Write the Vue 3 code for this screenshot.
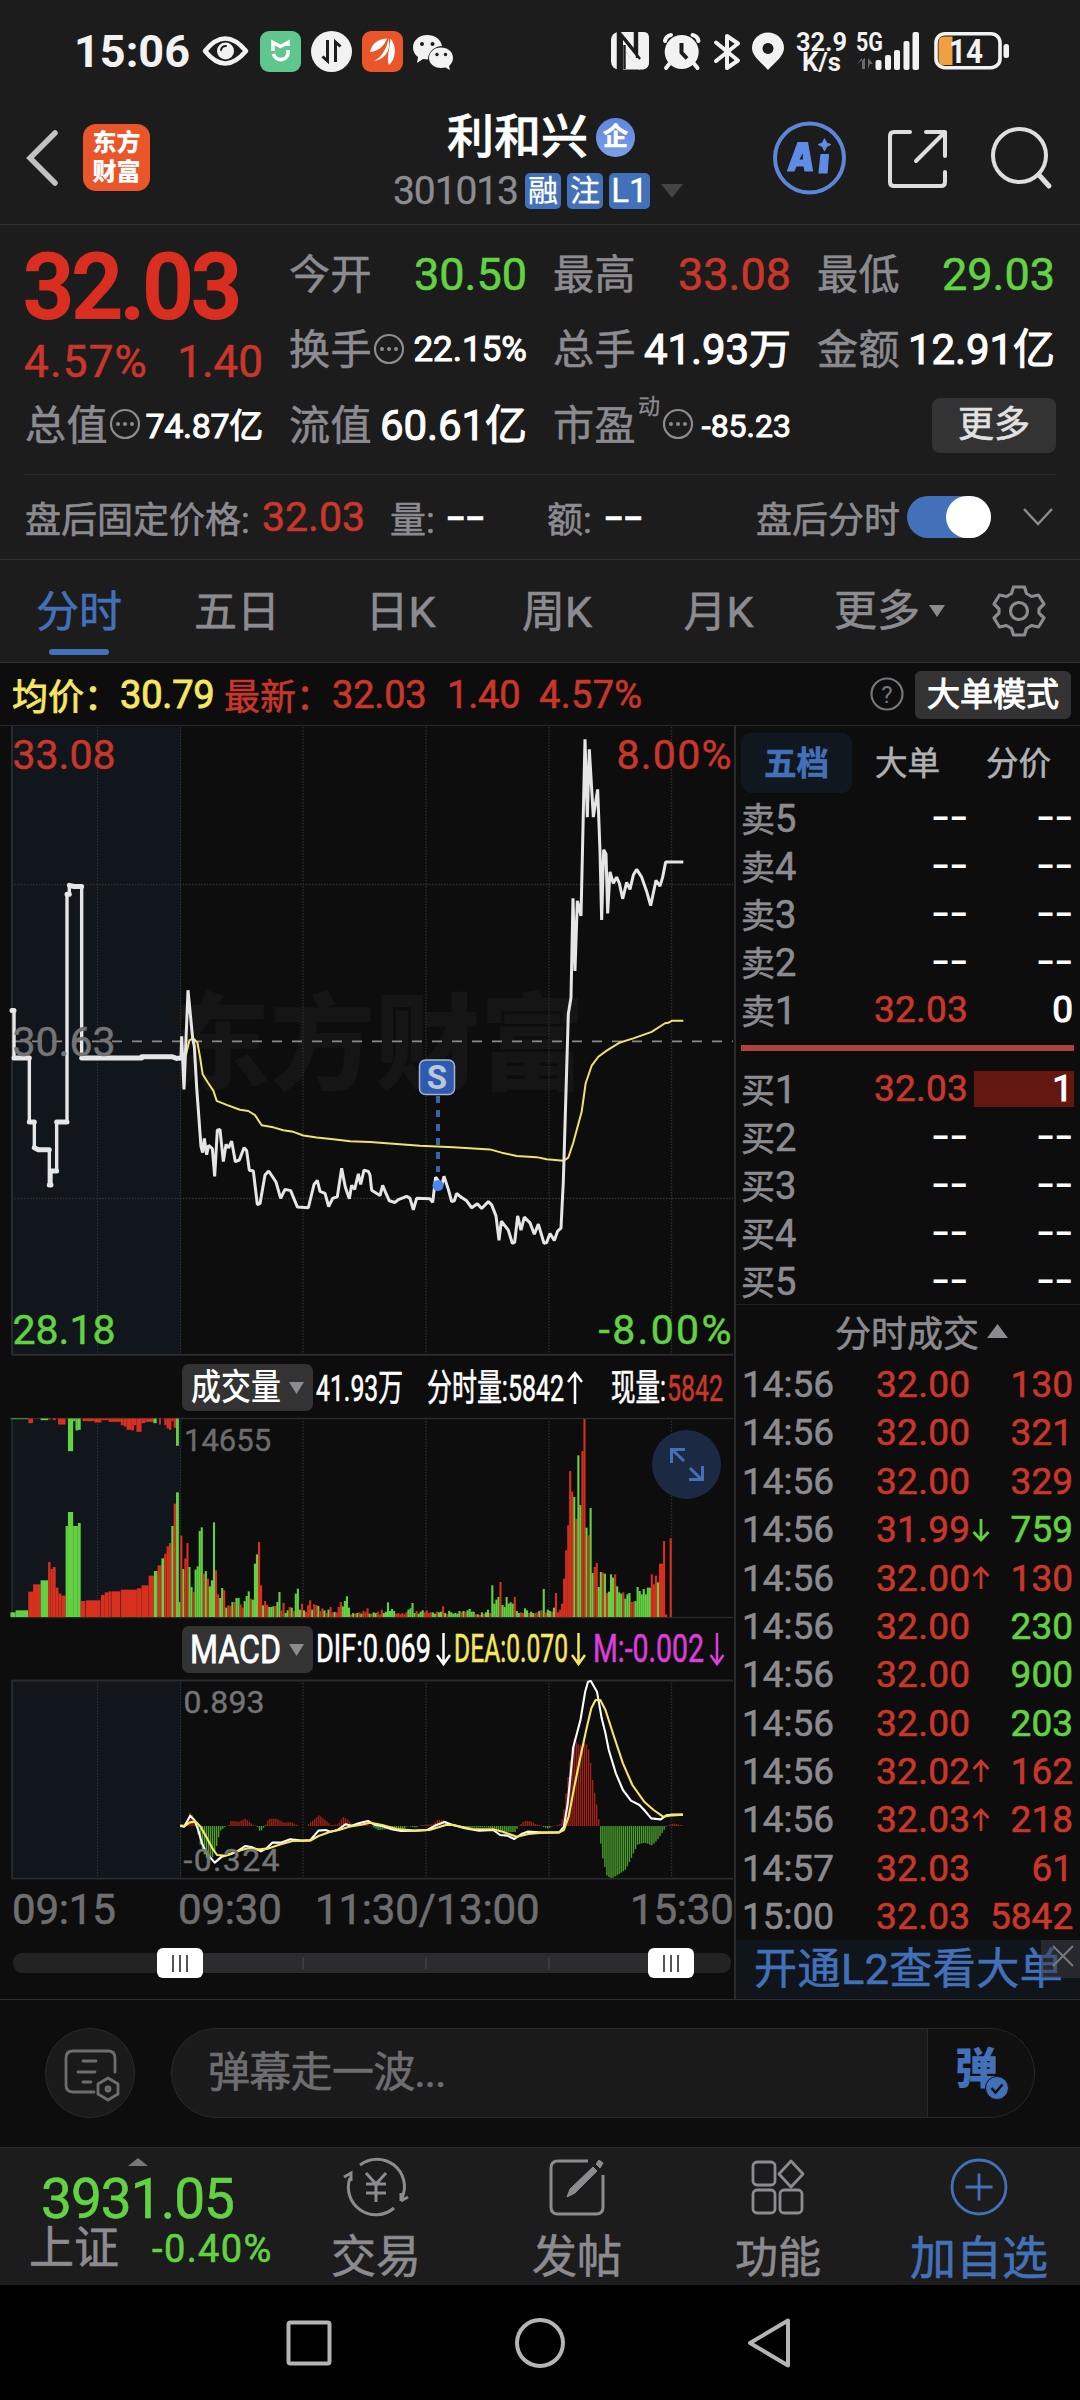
<script setup>
const GREY = '#8b8b90'

const quotes = [
  { k: '今开', v: '30.50', c: 'green big' },
  { k: '最高', v: '33.08', c: 'red big' },
  { k: '最低', v: '29.03', c: 'green big' },
  { k: '换手', v: '22.15%', c: 'small', info: true },
  { k: '总手', v: '41.93万', c: '' },
  { k: '金额', v: '12.91亿', c: '' },
]

const tabs = ['五日', '日K', '周K', '月K']
const asks = [5, 4, 3, 2, 1].map((n) => ({ k: '卖', n, p: n === 1 ? '32.03' : '--', q: n === 1 ? '0' : '--' }))
const bids = [1, 2, 3, 4, 5].map((n) => ({ k: '买', n, p: n === 1 ? '32.03' : '--', q: n === 1 ? '1' : '--' }))

const trades = [
  ['14:56', '32.00', '', '130', 'red'],
  ['14:56', '32.00', '', '321', 'red'],
  ['14:56', '32.00', '', '329', 'red'],
  ['14:56', '31.99', 'down', '759', 'green'],
  ['14:56', '32.00', 'up', '130', 'red'],
  ['14:56', '32.00', '', '230', 'green'],
  ['14:56', '32.00', '', '900', 'green'],
  ['14:56', '32.00', '', '203', 'green'],
  ['14:56', '32.02', 'up', '162', 'red'],
  ['14:56', '32.03', 'up', '218', 'red'],
  ['14:57', '32.03', '', '61', 'red'],
  ['15:00', '32.03', '', '5842', 'red'],
]

const gridX = [97.5, 180.5, 303, 426, 549, 671.5]

// Intraday curves, in thirds of a pixel across and 1/2.45 px down.
const preLine = '36,712 42,712 42,828 88,828 88,985 103,985 103,1048 115,1053 148,1053 148,1139 153,1139 153,1105 170,1105 170,985 201,985 201,427 208,427 208,405 222,408 245,408 245,828 425,828 425,825 515,825 530,829 543,828'
const preFlat = preLine
  .split(' ')
  .map((p) => p.split(',').map(Number))
  .flatMap((p, i, all) => (i && Math.abs(p[1] - all[i - 1][1]) <= 5 ? [`M${all[i - 1]}L${p}`] : []))
  .join('')
const priceLine = '543,828 545,775 552,905 564,662 578,780 583,800 590,900 603,1045 608,1060 613,1025 620,1065 626,1042 637,1050 644,1118 652,1005 660,1003 670,1082 678,1040 686,1048 695,1032 706,1082 718,1078 732,1048 740,1055 748,1103 760,1105 772,1187 780,1185 795,1115 806,1105 828,1132 842,1172 855,1150 872,1153 892,1193 925,1195 942,1138 952,1128 960,1155 975,1160 986,1192 998,1172 1012,1168 1025,1098 1036,1145 1048,1173 1055,1140 1064,1150 1075,1112 1082,1138 1092,1103 1105,1106 1110,1115 1115,1152 1140,1165 1148,1140 1158,1160 1168,1178 1185,1182 1195,1175 1220,1167 1230,1172 1240,1200 1250,1172 1290,1173 1298,1182 1307,1120 1325,1140 1332,1118 1345,1150 1355,1180 1363,1178 1370,1160 1385,1170 1400,1178 1415,1195 1432,1185 1445,1197 1465,1180 1475,1188 1488,1215 1497,1275 1504,1228 1525,1250 1537,1282 1544,1280 1553,1215 1563,1250 1573,1218 1590,1232 1603,1260 1615,1235 1632,1282 1640,1280 1650,1258 1663,1275 1673,1252 1683,1245 1690,1130 1705,720 1713,680 1719,437 1725,615 1732,443 1743,480 1755,47 1762,238 1768,72 1780,238 1793,170 1800,320 1805,490 1811,318 1818,328 1823,474 1830,372 1840,400 1850,385 1858,400 1868,438 1880,398 1890,415 1900,380 1910,366 1925,385 1940,420 1952,455 1968,393 1980,407 1988,385 1997,348 2050,348'
const avgLine = '545,828 558,820 568,785 580,780 592,790 600,825 608,868 625,890 640,908 650,933 680,943 720,955 745,958 765,968 785,993 820,998 850,1005 880,1009 910,1018 950,1023 1000,1027 1050,1032 1110,1034 1180,1038 1260,1043 1360,1047 1470,1052 1505,1060 1550,1068 1610,1071 1640,1076 1690,1080 1705,1072 1720,1035 1745,960 1757,890 1775,847 1795,825 1820,810 1860,790 1900,780 1955,764 1995,743 2005,742 2015,737 2050,737'

// Sub-chart data: 2.119 units per px across, 3 units per px down.
const SX = 1 / 2.119
const SY = 1 / 3
const segments = [
  [382, 'r244 g144 r176 r222 g150 g90 r75 g142 g152 g258 g269 r130 g138 r115 g92 g110 g284 r140 r68 g57 g87 r80 g28 r35 r33 g45 r45 g57 g57 r38 r28 g48 g63 g77 r55 g52'],
  [538, 'g160 g188 r225 r95 g35 r48 r36 g30 g30 g32 r33 g45 g75 r20 r42 g12 g20 r30 g28 r18 g70 g85 g22 r40'],
  [642, 'g20 r15 r35 r50 g22 r38 r36 g33 r18 r26 g20 r12 g22 r30 r14 g15 r14 r30 r45 g32 g48 g62 g28'],
  [742, 'r8 g12 r10 g12 r14 g10 r18 r14 r26 g10 r10 g14 g12 r16 r8 r22 g12 g16 g44 g18 g24 g18 r10 r12 r8 r12 r8 r14 g22 g26 g42 g12 r18 g10 g16 g20 r14'],
  [902, 'r20 r12 r14 g14 g10 r16 g14 g16 r32 g12 r8 g18 g14 g10 g12 g10 g18 r14 g18 r16 g20 g24 g16 g16 r8 g8 r6 g14 r10 g14 g22 r12'],
  [1041, 'g95 g40 g52 g60 r105 g36 g30 g60 g40 g44 g40 r60 g18 g12 r14 r12 g26 g20 r12 g16 g12 r12 r14 g18 r20'],
  [1150, 'g84 r14 g22 g18 r16 g28 r72 r14 r22 r40 r115 r200 r275'],
  [1206, 'r438 r376 g360 r295 g485 g336 r498 r594 g268 r245 g327 g132 r150 r162 g90 g135 r133 g130 r72 g76 g128 g118 r128 g92 g74 g70 r74 g55 g68 g72 r45 r46 g48 g90 g78 g68 g84 g68 g88 g88'],
  [1379, 'r128 r98 r124 g104 r160 r160 r228 r8'],
  [1419, 'r236'],
]
const RED = '#d7301f'
const GREEN = '#62d243'
const volume = segments.flatMap(([x0, s]) =>
  s.split(' ').map((t, i) => {
    const h = +t.slice(1) * SY
    return { x: (x0 + i * 4.33) * SX, y: 1617 - h, w: 2.1, h, c: t[0] === 'r' ? RED : GREEN }
  }),
)
const span = (str, hang) =>
  str.split(' ').map((t) => {
    const [a, b, h] = t.slice(1).split(',').map(Number)
    return { x: a * SX, w: (b - a) * SX, h: h * SY, y: hang ? 1418.5 : 1617 - h * SY, c: t[0] === 'r' ? RED : GREEN }
  })
const auction = [
  ...span('g22,33,14 g33,60,20 r60,70,76 r70,86,98 g86,102,110 r102,107,165 r107,112,144 r112,118,150 r118,124,88 r124,130,70 r130,139,64 g139,144,273 g144,155,315 g155,165,273 g165,171,282 r171,181,48 r182,213,50 r214,222,66 r222,230,74 r230,235,77 r236,255,77 r256,290,82 r290,300,86 r300,315,95 r315,326,124 g326,334,138 r334,342,155 g342,348,176 r348,353,190 r353,358,212 r358,363,222 g363,368,273 r368,373,340 g373,379,374 g379,383,45', false),
  ...span('g22,60,2 r60,70,14 g86,102,5 r102,107,3 r112,118,5 r123,139,18 g144,155,98 g155,160,8 g160,165,36 g165,171,34 r175,200,8 r200,215,12 r215,230,5 r230,256,10 r256,262,20 r262,268,24 r268,278,34 r278,284,36 r284,289,20 r289,300,40 r300,308,14 r308,325,10 g325,332,14 r337,341,18 r348,353,20 r353,358,30 r358,363,34 r363,368,8 r368,373,28 g373,379,82', true),
]

const envelope = [
  [382, 5], [395, 3], [402, 45], [410, 20], [415, 0], [425, -70], [437, -98], [447, -100], [456, -70], [465, -15], [478, 0], [484, 3], [488, 15], [505, 13], [518, 22], [535, 4], [543, 0], [550, -18], [560, 0], [568, 22], [585, 22], [600, 10], [615, 12], [628, 3], [634, 0], [648, 0], [660, 15], [675, 33], [690, 15], [700, 3], [715, 5], [725, 27], [735, 20], [745, 5], [775, 5], [785, 0], [800, -12], [830, -8], [855, -8], [862, 0], [880, -5], [890, 3], [915, 5], [925, 18], [938, 18], [950, 8], [955, 0], [980, -6], [1030, -4], [1050, -10], [1070, -18], [1092, -18], [1096, 0], [1100, 3], [1110, 15], [1122, 15], [1135, 5], [1145, 2], [1150, -3], [1160, -8], [1170, 0], [1185, 5], [1192, 30], [1200, 120], [1207, 200], [1214, 264], [1227, 240], [1240, 250], [1247, 225], [1255, 130], [1265, 48], [1269, 0], [1273, -80], [1285, -150], [1295, -157], [1310, -145], [1325, -130], [1340, -85], [1350, -55], [1365, -50], [1380, -58], [1390, -45], [1400, -25], [1410, -2], [1415, 2], [1425, 8], [1448, 1],
]
const macd = []
for (let x = 384, k = 0; x < 1448; x += 4.33) {
  while (envelope[k + 1][0] < x) k++
  const [x0, y0] = envelope[k]
  const [x1, y1] = envelope[k + 1]
  const v = (y0 + ((y1 - y0) * (x - x0)) / (x1 - x0)) * SY
  macd.push({ x: x * SX, y: v > 0 ? 1826 - v : 1826, h: Math.abs(v), c: v > 0 ? '#a32318' : '#4ba32e' })
}
const dif = '382,587 390,590 396,575 403,557 412,570 420,600 428,640 438,670 455,698 470,680 490,672 505,662 520,648 535,652 553,664 565,655 577,638 595,638 615,628 640,632 658,630 675,602 690,600 700,605 715,600 732,583 745,587 760,580 780,573 795,585 810,588 830,598 850,603 880,602 905,600 925,585 942,576 955,583 985,595 1015,602 1045,600 1060,615 1075,617 1090,627 1105,612 1118,605 1150,608 1185,607 1195,590 1203,520 1215,350 1230,270 1240,185 1246,155 1252,153 1265,185 1275,265 1283,310 1290,360 1305,430 1320,480 1337,512 1355,525 1365,540 1380,565 1400,568 1412,556 1425,554 1447,554'
const dea = '382,587 392,588 402,577 415,575 425,590 437,620 450,655 460,675 475,677 500,665 525,655 550,658 570,655 590,645 620,633 658,632 675,618 700,605 718,600 740,590 765,584 785,578 810,585 840,597 880,602 910,600 945,585 960,585 1000,597 1045,598 1065,605 1095,620 1120,612 1150,608 1185,607 1195,600 1205,560 1217,470 1230,380 1243,295 1253,235 1262,210 1272,210 1283,240 1300,315 1320,400 1340,465 1365,515 1385,540 1405,560 1425,556 1447,554'
</script>

<template>
  <div class="screen">
    <header class="status">
      <span class="clock">15:06</span>
      <svg class="st-left" width="256" height="46" viewBox="200 28 256 46">
        <path d="M205 51Q225 26 246 51Q225 76 205 51Z" fill="none" stroke="#f2f2f2" stroke-width="4.5" stroke-linejoin="round" />
        <circle cx="225.500" cy="51" r="8.500" fill="#f2f2f2" />
        <path d="M221 50a5 5 0 0 1 5-4" fill="none" stroke="#1c1c1c" stroke-width="2" stroke-linecap="round" />
        <rect x="260" y="31" width="41" height="41" rx="9" fill="#5fc78d" />
        <path d="M273 51V42.500l7.500 4 7.500-4V46M273.500 54a7.500 7.500 0 0 0 14.500 0V50" fill="none" stroke="#fff" stroke-width="3.600" />
        <circle cx="331.500" cy="51.500" r="20.500" fill="#f2f2f2" />
        <path d="M327.500 40V61l-5-4.500M335.500 62V42l5 4.500" fill="none" stroke="#1c1c1c" stroke-width="3" />
        <rect x="362" y="31" width="41" height="41" rx="9" fill="#ea5529" />
        <path d="M370 52C372 44 377 39 387 38.500C384 46 379 51 370 52ZM374 61C382 57 387 48 388.500 38.500C391 48 387 59 374 61ZM389 65C386 59 390 48 390.500 38.500C397 46 396 59 389 65Z" fill="#fff" />
        <path d="M427 35c-8 0-14 5.500-14 12.500 0 4 2 7.500 5 9.500l-1 6 6-4 5 .5c0-8 7-13.500 14-13.500-1-6.500-7-11-15-11Z" fill="#f2f2f2" />
        <path d="M441 47.500c7 0 12 4.500 12 10.500 0 3-1.500 6-4 8l1 4-4.500-2.500-4.500.5c-7 0-12-4.500-12-10s5-10.500 12-10.500Z" fill="#f2f2f2" />
        <g fill="#1c1c1c"><circle cx="422" cy="44" r="2" /><circle cx="432.500" cy="44" r="2" /><circle cx="437" cy="54.500" r="1.700" /><circle cx="445.500" cy="54.500" r="1.700" /></g>
      </svg>
      <svg class="st-right" width="404" height="46" viewBox="608 28 404 46">
        <rect x="611" y="32" width="38" height="37.500" rx="8" fill="#f2f2f2" />
        <path d="M621 71V39L638 60V31" fill="none" stroke="#1c1c1c" stroke-width="8.500" />
        <path d="M615 69.500h8V40L636 56V32h8q5 0 5 6V62q0 7-6 7.500h-4L626 52V69.500Z" fill="#f2f2f2" />
        <path d="M624.500 69V45M637 58V32M624 38L640 59" fill="none" stroke="#1c1c1c" stroke-width="2.400" />
        <g fill="none" stroke="#f2f2f2" stroke-width="4" stroke-linecap="round">
          <path d="M665 41q1-5 6-6M698.500 41q-1-5-6-6M670 63l-4 5M693.500 63l4 5" />
        </g>
        <circle cx="681.700" cy="52" r="17" fill="#f2f2f2" />
        <path d="M681.500 43V52.500l5.500 6" fill="none" stroke="#1c1c1c" stroke-width="4" />
        <path d="M716 42.500L738 60.500 727 68V36l11 7.500L716 61" fill="none" stroke="#f2f2f2" stroke-width="4" stroke-linejoin="round" stroke-linecap="round" />
        <path d="M768 70C760 61 752 56 752 48a16 15.500 0 0 1 32 0c0 8-8 13-16 22ZM768 43a5.500 5.500 0 1 0 .01 0Z" fill="#f2f2f2" fill-rule="evenodd" />
        <g fill="#f2f2f2" font-weight="700">
          <text x="796" y="50.500" font-size="26" textLength="51" lengthAdjust="spacingAndGlyphs">32.9</text>
          <text x="802" y="70.500" font-size="25" textLength="39" lengthAdjust="spacingAndGlyphs">K/s</text>
          <text x="856" y="51" font-size="25" textLength="27" lengthAdjust="spacingAndGlyphs">5G</text>
          <rect x="875.500" y="60" width="6" height="10" rx="2" /><rect x="885" y="55" width="6" height="15" rx="2" /><rect x="894" y="50" width="6" height="20" rx="2" /><rect x="903.500" y="41" width="6" height="29" rx="2" /><rect x="912.500" y="32" width="6.500" height="38" rx="2" />
        </g>
        <path d="M857 64l5-6v11h3V58M868 69V58l5 6h-3" fill="#6a6a6a" />
        <rect x="936" y="33.700" width="64" height="34" rx="9" fill="none" stroke="#f2f2f2" stroke-width="3.600" />
        <path d="M944 36.500h8.500v28.500h-8.500q-5.500 0-5.500-6v-16.500q0-6 5.500-6Z" fill="#f0a040" />
        <rect x="1003.500" y="44" width="5.500" height="14" rx="2.500" fill="#f2f2f2" />
        <text x="949" y="62.500" font-size="34" font-weight="700" fill="#f2f2f2" textLength="34" lengthAdjust="spacingAndGlyphs">14</text>
      </svg>
    </header>

    <div class="head">
      <svg class="back" width="34" height="58" viewBox="0 0 34 58"><path d="M29 4L4 29l25 25" fill="none" stroke="#c2c2c2" stroke-width="5.500" stroke-linecap="round" /></svg>
      <div class="logo"><span>东方</span><span>财富</span></div>
      <div class="name">
        <div class="title">利和兴<i>企</i></div>
        <div class="code"><span>301013</span><b>融</b><b>注</b><b class="l1">L1</b>
          <svg width="22" height="14" viewBox="0 0 22 14"><path d="M0 0h22L11 14Z" fill="#444446" /></svg></div>
      </div>
      <svg class="head-icons" width="290" height="80" viewBox="768 117 290 80" fill="none" stroke="#dedede" stroke-width="4" stroke-linecap="round" stroke-linejoin="round">
        <circle cx="808.500" cy="157" r="34.500" stroke="#5d86d8" />
        <path d="M786.500 170L797 141.500h9.500L811.500 170h-7.500l-1-5h-8l-2 5ZM797.500 159h5v-9ZM820 153.500h7.500l-1.500 18.500h-8ZM823.500 138l2 4 4 1.500-4 2-2 4-2-4-4-2 4-1.500Z" fill="#5f8ce6" stroke="#5f8ce6" stroke-width="1.200" fill-rule="evenodd" />
        <path d="M909 131H893q-4 0-4 4V181q0 4 4 4H940q4 0 4-4V171M925 131H944V155M944 131L915 160" />
        <circle cx="1018.500" cy="154.500" r="26.500" /><path d="M1038 174l10 11" stroke-width="5" />
      </svg>
    </div>

    <section class="quote">
      <div class="last"><div class="price">32.03</div><div class="chg"><span>4.57%</span><span>1.40</span></div></div>
      <div v-for="q in quotes" :key="q.k" class="cell">
        <span class="k">{{ q.k }}<svg v-if="q.info" class="info" width="32" height="32" viewBox="0 0 32 32"><circle cx="16" cy="16" r="14" fill="none" :stroke="GREY" stroke-width="2.200" /><g :fill="GREY"><circle cx="9" cy="16" r="2" /><circle cx="16" cy="16" r="2" /><circle cx="23" cy="16" r="2" /></g></svg></span>
        <span class="v" :class="q.c">{{ q.v }}</span>
      </div>
      <div class="cell"><span class="k">总值<svg class="info" width="32" height="32" viewBox="0 0 32 32"><circle cx="16" cy="16" r="14" fill="none" :stroke="GREY" stroke-width="2.200" /><g :fill="GREY"><circle cx="9" cy="16" r="2" /><circle cx="16" cy="16" r="2" /><circle cx="23" cy="16" r="2" /></g></svg></span><span class="v s34">74.87亿</span></div>
      <div class="cell"><span class="k">流值</span><span class="v">60.61亿</span></div>
      <div class="cell"><span class="k">市盈<sup>动</sup><svg class="info" width="32" height="32" viewBox="0 0 32 32"><circle cx="16" cy="16" r="14" fill="none" :stroke="GREY" stroke-width="2.200" /><g :fill="GREY"><circle cx="9" cy="16" r="2" /><circle cx="16" cy="16" r="2" /><circle cx="23" cy="16" r="2" /></g></svg></span><span class="v s32">-85.23</span></div>
      <div class="cell end"><button class="more">更多</button></div>
    </section>

    <section class="after">
      <span class="k w1">盘后固定价格:</span><span class="red num">32.03</span>
      <span class="k w2">量:</span><span class="dash">--</span>
      <span class="k w3">额:</span><span class="dash">--</span>
      <span class="k w4">盘后分时</span>
      <span class="toggle"><i></i></span>
      <svg width="32" height="20" viewBox="0 0 32 20"><path d="M2 2L16 17 30 2" fill="none" stroke="#8b8b90" stroke-width="2.500" /></svg>
    </section>

    <nav class="tabs">
      <span class="on">分时</span>
      <span v-for="t in tabs" :key="t">{{ t }}</span>
      <span class="mt">更多<svg width="16" height="12" viewBox="0 0 16 12"><path d="M0 0h16L8 12Z" :fill="GREY" /></svg></span>
      <svg class="gear" width="54" height="54" viewBox="-27 -27 54 54" fill="none" :stroke="GREY" stroke-width="3.200" stroke-linejoin="round">
        <circle r="8.500" />
        <path d="M-5.500-24h11l2 6.500 5 3 7-1.500 5.500 9-5 5v4l5 5-5.500 9-7-1.500-5 3-2 6.500h-11l-2-6.500-5-3-7 1.500-5.500-9 5-5v-4l-5-5 5.500-9 7 1.500 5-3Z" />
      </svg>
    </nav>

    <div class="legend">
      <span class="yellow">均价：</span><span class="yellow n">30.79</span>
      <span class="red l2">最新：</span><span class="red n">32.03</span><span class="red n g">1.40</span><span class="red n g2">4.57%</span>
      <svg class="help" width="34" height="34" viewBox="0 0 34 34"><circle cx="17" cy="17" r="15.500" fill="none" stroke="#77777b" stroke-width="2.200" /><text x="17" y="25.500" text-anchor="middle" font-size="24" fill="#77777b">?</text></svg>
      <button class="mode">大单模式</button>
    </div>

    <main class="body">
      <div class="charts">
        <svg class="chart" width="734" height="634" viewBox="0 726 734 634">
          <rect x="12" y="727" width="169" height="627" fill="#11161d" />
          <text class="mark" x="165" y="1081" textLength="420">东方财富</text>
          <g class="grid">
            <path v-for="x in gridX" :key="x" :d="`M${x} 727V1354`" />
            <path d="M12 884.500H733M12 1198.500H733" />
          </g>
          <path d="M12 726V1355M12 1354.700H733" stroke="#2b2b2d" stroke-width="2" />
          <path d="M12 1041.300H733" stroke="#8a8a8c" stroke-width="1.800" stroke-dasharray="10 10" />
          <g transform="translate(0 720) scale(0.33333 0.40816)" fill="none" stroke-linejoin="round">
            <polyline :points="avgLine" stroke="#f0e36c" stroke-width="2" vector-effect="non-scaling-stroke" />
            <polyline :points="preLine" stroke="#e6e6e6" stroke-width="3.400" vector-effect="non-scaling-stroke" />
            <path :d="preFlat" stroke="#e6e6e6" stroke-width="5" stroke-linecap="round" vector-effect="non-scaling-stroke" />
            <polyline :points="priceLine" stroke="#e6e6e6" stroke-width="3" stroke-linejoin="bevel" vector-effect="non-scaling-stroke" />
          </g>
          <g font-size="41" stroke-width="0.500">
            <text x="12.500" y="769" fill="#c9362a" stroke="#c9362a">33.08</text>
            <text x="12.500" y="1056" fill="#747476" stroke="#747476">30.63</text>
            <text x="12.500" y="1344" fill="#62d243" stroke="#62d243">28.18</text>
            <text x="616.500" y="769" fill="#c9362a" stroke="#c9362a" textLength="115">8.00%</text>
            <text x="598.500" y="1344" fill="#62d243" stroke="#62d243" textLength="133">-8.00%</text>
          </g>
          <path d="M438 1096V1172" stroke="#3a63aa" stroke-width="4" stroke-dasharray="7 7" />
          <circle cx="438" cy="1185.500" r="5.500" fill="#4a86ec" />
          <rect x="419.500" y="1060" width="35" height="34.500" rx="6" fill="#2c5bb0" stroke="#aab4cc" stroke-width="1.500" />
          <text x="437" y="1089" text-anchor="middle" font-size="33" font-weight="700" fill="#bcc6da">S</text>
        </svg>

        <div class="ind up">
          <button class="pill"><svg width="131" height="47" viewBox="182 1363 131 47"><text x="191" y="1399" font-size="36" font-weight="500" fill="#fff" textLength="90" lengthAdjust="spacingAndGlyphs">成交量</text><path d="M289 1381h15l-7.500 12Z" fill="#8b8b90" /></svg></button>
          <svg width="420" height="58" viewBox="313 1358 420 58" font-size="37" font-weight="400" fill="#fff" stroke="#fff" stroke-width="0.600">
            <text x="316" y="1400.500" textLength="87" lengthAdjust="spacingAndGlyphs">41.93万</text>
            <text x="427" y="1400.500" textLength="137" lengthAdjust="spacingAndGlyphs">分时量:5842</text>
            <path d="M575 1404V1373M568 1382l7-9 7 9" fill="none" stroke-width="2.500" />
            <text x="611" y="1400.500" textLength="55" lengthAdjust="spacingAndGlyphs">现量:</text>
            <text x="667" y="1400.500" textLength="56" lengthAdjust="spacingAndGlyphs" fill="#c9362a" stroke="#c9362a">5842</text>
          </svg>
        </div>

        <svg class="chart" width="734" height="204" viewBox="0 1416 734 204">
          <rect x="12" y="1418" width="169" height="199" fill="#11161d" />
          <g class="grid"><path v-for="x in gridX" :key="x" :d="`M${x} 1418V1617`" /></g>
          <path d="M12 1418.500H733M12 1418V1617.500H733" fill="none" stroke="#2b2b2d" stroke-width="1.500" />
          <rect v-for="(b, i) in auction" :key="'a' + i" :x="b.x" :y="b.y" :width="b.w" :height="b.h" :fill="b.c" />
          <rect v-for="(b, i) in volume" :key="i" :x="b.x" :y="b.y" :width="b.w" :height="b.h" :fill="b.c" />
          <text x="184" y="1450.500" font-size="31" fill="#6c6c6e" stroke="#6c6c6e" stroke-width="0.400">14655</text>
          <circle cx="686.500" cy="1464.500" r="34.500" fill="#1b2a42" />
          <path d="M684 1461l-12.500-12M671.500 1463V1449.500H685M690 1468l12 12M702.500 1466V1479.500H689" fill="none" stroke="#4371b9" stroke-width="3" />
        </svg>

        <div class="ind">
          <button class="pill"><svg width="131" height="47" viewBox="182 1363 131 47"><text x="190" y="1400" font-size="38" fill="#fff" stroke="#fff" stroke-width="0.800" textLength="91" lengthAdjust="spacingAndGlyphs">MACD</text><path d="M289 1381h15l-7.500 12Z" fill="#8b8b90" /></svg></button>
          <svg width="420" height="58" viewBox="313 1358 420 58" font-size="38" stroke-width="0.600">
            <text x="316" y="1399.500" textLength="115" lengthAdjust="spacingAndGlyphs" fill="#fff" stroke="#fff">DIF:0.069</text>
            <text x="454" y="1399.500" textLength="114" lengthAdjust="spacingAndGlyphs" fill="#f5e663" stroke="#f5e663">DEA:0.070</text>
            <text x="593" y="1399.500" textLength="111" lengthAdjust="spacingAndGlyphs" fill="#d93fd9" stroke="#d93fd9">M:-0.002</text>
            <g fill="none" stroke-width="2.500"><path d="M443.500 1371V1402M437 1393l6.500 9 6.500-9" stroke="#fff" /><path d="M578.500 1371V1402M572 1393l6.500 9 6.500-9" stroke="#f5e663" /><path d="M717 1371V1402M710.500 1393l6.500 9 6.500-9" stroke="#d93fd9" /></g>
          </svg>
        </div>

        <svg class="chart" width="734" height="204" viewBox="0 1678 734 204">
          <rect x="12" y="1680" width="169" height="198" fill="#11161d" />
          <g class="grid"><path v-for="x in gridX" :key="x" :d="`M${x} 1680V1878`" /></g>
          <path d="M12 1680.500H733M12 1680V1878.700H733" fill="none" stroke="#2b2b2d" stroke-width="1.800" />
          <rect v-for="(b, i) in macd" :key="i" :x="b.x" :y="b.y" width="1.350" :height="b.h" :fill="b.c" />
          <g transform="translate(0 1630) scale(0.47192 0.33333)" fill="none" stroke-width="2.100" stroke-linejoin="round">
            <polyline :points="dif" stroke="#fff" vector-effect="non-scaling-stroke" />
            <polyline :points="dea" stroke="#f5e663" vector-effect="non-scaling-stroke" />
          </g>
          <g font-size="32" fill="#747476" stroke="#747476" stroke-width="0.400"><text x="183.500" y="1713" textLength="81">0.893</text><text x="183.500" y="1871" textLength="96">-0.324</text></g>
        </svg>

        <div class="axis"><span>09:15</span><span>09:30</span><span>11:30/13:00</span><span>15:30</span></div>
        <div class="slider">
          <svg width="734" height="40" viewBox="0 1943 734 40">
            <rect x="13" y="1953" width="718" height="20" rx="9" fill="#232324" />
            <rect x="180" y="1953" width="491" height="20" fill="#2c2c2e" />
            <path d="M303 1957v12M426 1957v12M549 1957v12" stroke="#414144" stroke-width="1.500" />
            <g fill="#fff"><rect x="157" y="1948" width="46" height="30" rx="6" /><rect x="648" y="1948" width="46" height="30" rx="6" /></g>
            <path d="M173 1955v17M180 1955v17M187 1955v17M664 1955v17M671 1955v17M678 1955v17" stroke="#555" stroke-width="2" />
          </svg>
        </div>
      </div>

      <aside class="side">
        <div class="sub"><span class="on">五档</span><span>大单</span><span>分价</span></div>
        <div class="book">
          <div v-for="r in asks" :key="r.n" class="row"><span class="lab">{{ r.k }}<b>{{ r.n }}</b></span><span class="p" :class="r.p === '--' ? 'nil' : 'red'">{{ r.p }}</span><span class="q" :class="{ nil: r.q === '--' }">{{ r.q }}</span></div>
        </div>
        <div class="bar"></div>
        <div class="book">
          <div v-for="r in bids" :key="r.n" class="row"><span class="lab">{{ r.k }}<b>{{ r.n }}</b></span><span class="p" :class="r.p === '--' ? 'nil' : 'red'">{{ r.p }}</span><span class="q" :class="{ nil: r.q === '--', hot: r.n === 1 }">{{ r.q }}</span></div>
        </div>
        <div class="thead">分时成交<svg width="21" height="14" viewBox="0 0 21 14"><path d="M0 14h21L10.500 0Z" :fill="GREY" /></svg></div>
        <div class="ticks">
          <div v-for="(t, i) in trades" :key="i" class="tick">
            <span class="t">{{ t[0] }}</span><span class="tp red">{{ t[1] }}</span>
            <svg width="18" height="26" viewBox="0 0 18 26" fill="none" stroke-width="2.800">
              <path v-if="t[2] === 'up'" d="M9 24V3M1.500 11L9 3l7.500 8" stroke="#c9362a" />
              <path v-if="t[2] === 'down'" d="M9 2V23M1.500 15L9 23l7.500-8" stroke="#62d243" />
            </svg>
            <span class="tq" :class="t[4]">{{ t[3] }}</span>
          </div>
        </div>
        <div class="promo">开通L2查看大单<span class="close"><svg width="22" height="22" viewBox="0 0 22 22"><path d="M1 1l20 20M21 1L1 21" stroke="#77797d" stroke-width="2" /></svg></span></div>
      </aside>
    </main>

    <section class="chat">
      <div class="round">
        <svg width="56" height="52" viewBox="0 0 56 52" fill="none" stroke="#6e6e70" stroke-width="2.800" stroke-linecap="round" stroke-linejoin="round"><path d="M30 43H9q-7 0-7-7V9q0-7 7-7H44q7 0 7 7V23M19 12H32M14 23H31M19 33H27" /><path d="M44 29l10 6v10l-10 6-10-6V35Z" /><circle cx="44" cy="40" r="2" /></svg>
      </div>
      <div class="field"><span>弹幕走一波...</span><div class="send">弹<svg width="24" height="24" viewBox="0 0 24 24"><circle cx="12" cy="12" r="11.500" fill="#4371b9" stroke="#111" stroke-width="1" /><path d="M6.500 12l4 4.500 7-8" fill="none" stroke="#111" stroke-width="2.500" /></svg></div></div>
    </section>

    <footer class="foot">
      <div class="index">
        <svg width="20" height="8" viewBox="0 0 20 8"><path d="M0 8h20L10 0Z" fill="#77777b" /></svg>
        <div class="pt">3931.05</div>
        <div class="sh"><span>上证</span><b>-0.40%</b></div>
      </div>
      <div class="item">
        <svg width="68" height="60" viewBox="-34 -30 68 60" fill="none" :stroke="GREY" stroke-width="3"><path d="M-16-22A27.500 27.500 0 0 1 26 11M25 14l7-4M25 14V6M18 21A27.500 27.500 0 0 1-26-9M-32-10l7-4V-6M-10-14L0-3 10-14M0-3V15M-10-3H10M-10 6H10" /></svg>
        <span>交易</span>
      </div>
      <div class="item">
        <svg width="60" height="60" viewBox="0 0 60 60" fill="none" :stroke="GREY" stroke-width="3"><path d="M41 4H11q-7 0-7 7V50q0 7 7 7H49q7 0 7-7V18" /><path d="M20 40l3-8L46 10l4 4L28 36Z M49 7l3-4 4 3-3 5Z" :fill="GREY" stroke-width="1" /></svg>
        <span>发帖</span>
      </div>
      <div class="item fn">
        <svg width="56" height="60" viewBox="0 0 56 60" fill="none" :stroke="GREY" stroke-width="2.800" stroke-linejoin="round"><rect x="3" y="5" width="22" height="23" rx="4" /><rect x="3" y="33" width="22" height="23" rx="4" /><rect x="30" y="33" width="22" height="23" rx="4" /><path d="M41 4l12 13-12 13-12-13Z" /></svg>
        <span>功能</span>
      </div>
      <div class="item add">
        <svg width="60" height="60" viewBox="-30 -30 60 60" fill="none" stroke="#4371b9" stroke-width="2.800"><circle r="27" /><path d="M-13.500 0h27M0-13.500v27" /></svg>
        <span>加自选</span>
      </div>
    </footer>

    <div class="sys">
      <svg width="510" height="56" viewBox="284 2314 510 56" fill="none" stroke="#b4b4b4" stroke-width="4" stroke-linejoin="round"><rect x="288.500" y="2321.500" width="41" height="41" rx="2" /><circle cx="540" cy="2342" r="23" /><path d="M788 2319.500V2364.500L750 2342Z" /></svg>
    </div>
  </div>
</template>

<style>
html, body { margin: 0; background: #1c1c1c; }
</style>

<style scoped>
.screen { width: 1080px; height: 2400px; overflow: hidden; background: #1c1c1c; color: #fff; font-family: Roboto, "Noto Sans CJK SC", sans-serif; display: flex; flex-direction: column; -webkit-text-stroke: 0.600px; }
.screen * { box-sizing: border-box; flex-shrink: 0; }
.screen svg { display: block; overflow: visible; -webkit-text-stroke: 0; }
button { border: 0; padding: 0; margin: 0; font: inherit; color: inherit; }
.red { color: #c9362a; }
.green { color: #62d243; }
.yellow { color: #f5e663; }

.status { height: 102px; display: flex; align-items: center; padding-left: 74px; }
.clock { font-size: 45px; font-weight: 700; letter-spacing: 0; width: 126px; color: #f2f2f2; -webkit-text-stroke: 0; }
.st-right { margin-left: 152px; }

.head { height: 123px; display: flex; align-items: center; border-bottom: 1px solid #333335; padding: 0 22px 11px 26px; }
.logo { width: 67px; height: 67px; margin-left: 23px; border-radius: 13px; background: #ea5529; display: flex; flex-direction: column; align-items: center; justify-content: center; font-size: 24px; line-height: 29px; font-weight: 900; -webkit-text-stroke: 0; }
.name { width: 330px; margin-left: 229px; margin-top: 7px; }
.title { display: flex; align-items: center; height: 48px; font-size: 47px; font-weight: 500; line-height: 48px; padding-left: 68px; }
.title i { width: 39px; height: 39px; border-radius: 50%; margin-left: 8px; background: linear-gradient(#5f85e0, #7c9fe6); font-style: normal; font-size: 25px; line-height: 38px; text-align: center; font-weight: 700; }
.code { display: flex; align-items: center; height: 36px; margin-top: 12px; padding-left: 14px; font-size: 39px; line-height: 36px; color: #8b8b90; -webkit-text-stroke: 0.300px; }
.code span { width: 132px; letter-spacing: -1.100px; }
.code b { width: 36px; height: 36px; border-radius: 5px; background: #4371b9; color: #fff; font-weight: 400; font-size: 30px; line-height: 36px; text-align: center; margin-right: 6px; }
.code .l1 { width: 41px; font-size: 33px; margin-right: 11px; }
.head-icons { margin-left: 60px; }

.quote { height: 249px; padding: 12px 0 0 25px; display: grid; grid-template-columns: repeat(4, 238px); grid-template-rows: 75px 76px 75px; column-gap: 26px; }
.last { grid-row: 1 / 3; }
.price { height: 98px; line-height: 101px; font-size: 90px; font-weight: 500; color: #d92e20; letter-spacing: -2.600px; margin-left: -2px; -webkit-text-stroke: 2px; }
.chg { display: flex; justify-content: space-between; font-size: 44px; line-height: 55px; color: #c9362a; margin-left: -1px; }
.chg span:first-child { letter-spacing: 1.200px; }
.cell { display: flex; align-items: center; justify-content: space-between; white-space: nowrap; }
.cell .k { display: flex; align-items: center; font-size: 41px; color: #8b8b90; line-height: 60px; letter-spacing: 0.500px; }
.info { margin: -3px 0 0 1px; }
.v { font-size: 42px; line-height: 60px; letter-spacing: -0.100px; -webkit-text-stroke: 1px; }
.v.big { font-size: 45px; letter-spacing: 0; -webkit-text-stroke: 0.600px; }
.v.small { font-size: 35px; letter-spacing: 0; }
.v.s34 { font-size: 34px; letter-spacing: -0.300px; }
.v.s32 { font-size: 32px; letter-spacing: 0; }
sup { font-size: 22px; line-height: 24px; align-self: flex-start; margin: -1px 0 0 2px; -webkit-text-stroke: 0.300px; }
.end { justify-content: flex-end; }
.more { width: 124px; height: 55px; border-radius: 8px; background: #333334; color: #e2e2e2; font-size: 36px; line-height: 53px; margin-right: -1px; }

.after { height: 86px; display: flex; align-items: center; padding: 0 0 0 25px; border-bottom: 1px solid #333335; background: linear-gradient(#2a2a2b, #2a2a2b) 24px 0 / 1032px 1px no-repeat; font-size: 36px; color: #8b8b90; white-space: nowrap; }
.w1 { width: 237px; }
.num { font-size: 41px; width: 128px; }
.w2 { width: 56px; }
.dash { color: #fff; font-weight: 500; width: 101px; transform: scaleX(1.600); transform-origin: left; padding-top: 3px; }
.w3 { width: 57px; }
.w3 + .dash { width: 152px; }
.w4 { width: 151px; }
.toggle { width: 84px; height: 42px; border-radius: 21px; background: #4371b9; display: flex; justify-content: flex-end; margin-right: 31px; }
.toggle i { width: 45px; height: 42px; border-radius: 21px; background: #fff; }

.tabs { height: 103px; display: grid; grid-template-columns: 158px 158px 169px 144px 179px 163px 95px; align-items: center; justify-items: center; font-size: 43px; color: #8b8b90; border-bottom: 1px solid #333335; }
.tabs > span { height: 102px; line-height: 105px; }
.tabs .on { color: #4371b9; position: relative; }
.tabs .on::after { content: ""; position: absolute; left: 13px; right: 13px; bottom: 7px; height: 6px; border-radius: 3px; background: #4371b9; }
.mt { display: flex; align-items: center; }
.mt svg { margin-left: 9px; }

.legend { height: 63px; display: flex; align-items: center; background: #0d0d0d; border-bottom: 1px solid #2b2b2d; padding-left: 12px; font-size: 36px; white-space: nowrap; }
.legend .yellow { -webkit-text-stroke: 0.900px; }
.legend .n { font-size: 38px; width: 104px; letter-spacing: -0.200px; padding-top: 2px; }
.legend .yellow:first-child, .l2 { width: 108px; }
.legend .n.g { margin-left: 11px; width: 92px; }
.legend .n.g2 { width: 331px; letter-spacing: 0.300px; }
.mode { width: 156px; height: 48px; border-radius: 6px; background: #333334; font-size: 33px; line-height: 47px; margin: 1px 0 0 11px; -webkit-text-stroke: 1px; }

.body { height: 1274px; display: flex; background: #0d0d0d; border-bottom: 1px solid #2f2f31; }
.charts { width: 734px; }
.chart { font-family: Roboto, sans-serif; }
.mark { font-family: "Noto Sans CJK SC", sans-serif; font-weight: 900; font-size: 105px; fill: #151515; }
.grid { stroke: #303032; stroke-width: 1.300; stroke-dasharray: 1.500 1.500; fill: none; }
.ind { display: flex; align-items: center; height: 58px; padding-left: 182px; }
.ind.up { margin-top: -2px; }
.pill { width: 131px; height: 47px; border-radius: 7px; background: #333334; }
.axis { height: 56px; display: grid; grid-template-columns: 166px 137px 315px 1fr; padding-left: 12px; font-size: 42px; line-height: 56px; color: #6e6e70; white-space: nowrap; letter-spacing: -0.200px; }
.slider { height: 62px; padding-top: 5px; }

.side { width: 346px; border-left: 2px solid #2b2b2d; display: flex; flex-direction: column; }
.sub { display: flex; height: 67px; padding: 7px 0 0 5px; font-size: 32.500px; line-height: 62px; color: #b0b0b2; text-align: center; }
.sub span { width: 111px; height: 60px; }
.sub .on { border-radius: 10px; background: #10171f; color: #4371b9; font-weight: 700; }
.row { height: 48.100px; display: flex; align-items: center; padding-left: 5px; font-size: 37px; white-space: nowrap; }
.lab { width: 92px; font-size: 34px; color: #8b8b90; }
.lab b { font-size: 38px; font-weight: 400; }
.p { width: 135px; text-align: right; letter-spacing: 0.200px; }
.q { width: 100px; margin-left: 6px; padding-right: 1px; text-align: right; -webkit-text-stroke: 1.100px; }
.nil { transform: scaleX(1.450); transform-origin: right; font-weight: 500; letter-spacing: 0; -webkit-text-stroke: 0; }
.q.nil { transform-origin: calc(100% - 1px) 50%; }
.q.hot { background: #63170f; height: 36px; line-height: 36px; }
.bar { height: 6px; margin: 12px 6px 13px 5px; background: #b0433c; }
.thead { height: 56.500px; display: flex; align-items: center; justify-content: center; border-top: 1px solid #1f1f20; font-size: 36px; color: #8b8b90; margin-top: -1px; padding: 0 0 3px 27px; }
.thead svg { margin-left: 8px; }
.ticks { height: 580px; }
.tick { height: 48.370px; display: flex; align-items: center; padding-left: 6px; font-size: 37px; white-space: nowrap; }
.t { width: 134px; color: #8b8b90; }
.tp { width: 96px; letter-spacing: 0.300px; }
.tq { width: 83px; text-align: right; }
.promo { position: relative; flex: 1; background: #10151b; color: #4371b9; font-size: 43px; line-height: 58px; padding-left: 18px; white-space: nowrap; letter-spacing: 0.500px; }
.close { position: absolute; right: 0; top: 0; width: 39px; height: 38px; background: rgba(60, 60, 64, 0.500); display: flex; justify-content: center; padding: 5px 0 0 5px; }

.chat { height: 148px; display: flex; align-items: center; background: #0d0d0d; padding: 0 0 2px 45px; border-bottom: 1px solid #29292b; }
.round { width: 90px; height: 90px; border-radius: 50%; background: #1a1a1b; border: 1px solid #2a2a2b; padding: 20px 0 0 18px; }
.field { width: 864px; height: 90px; margin-left: 36px; border-radius: 45px; background: #1a1a1b; border: 1px solid #2a2a2b; overflow: hidden; display: flex; justify-content: space-between; align-items: center; padding-left: 36px; font-size: 42px; color: #6e6e70; line-height: 84px; letter-spacing: -0.700px; }
.send { position: relative; width: 107px; height: 90px; background: #101011; border-left: 1px solid #2a2a2b; color: #4371b9; font-weight: 900; font-size: 43px; line-height: 82px; padding-left: 27px; -webkit-text-stroke: 0; }
.send svg { position: absolute; left: 57px; top: 48px; }

.foot { height: 137px; display: flex; }
.index { width: 300px; padding-top: 10px; }
.index > svg { margin-left: 128px; }
.pt { font-size: 55px; line-height: 60px; color: #62d243; letter-spacing: -1px; padding-left: 41px; margin-top: 3px; }
.sh { display: flex; align-items: center; font-size: 45px; line-height: 44px; color: #8b8b90; padding-left: 29px; margin-top: -2px; }
.sh b { color: #62d243; font-weight: 400; font-size: 38px; margin-left: 33px; letter-spacing: 1.400px; }
.item { width: 152px; display: flex; flex-direction: column; align-items: center; padding-top: 9px; font-size: 45px; color: #8b8b90; margin-right: 49px; }
.item span { margin-top: 12px; line-height: 58px; }
.item.fn { font-size: 43px; }
.item.add { font-size: 46px; color: #4371b9; margin-right: 0; }
.sys { height: 116px; background: #000; padding: 30px 0 0 284px; }
</style>
